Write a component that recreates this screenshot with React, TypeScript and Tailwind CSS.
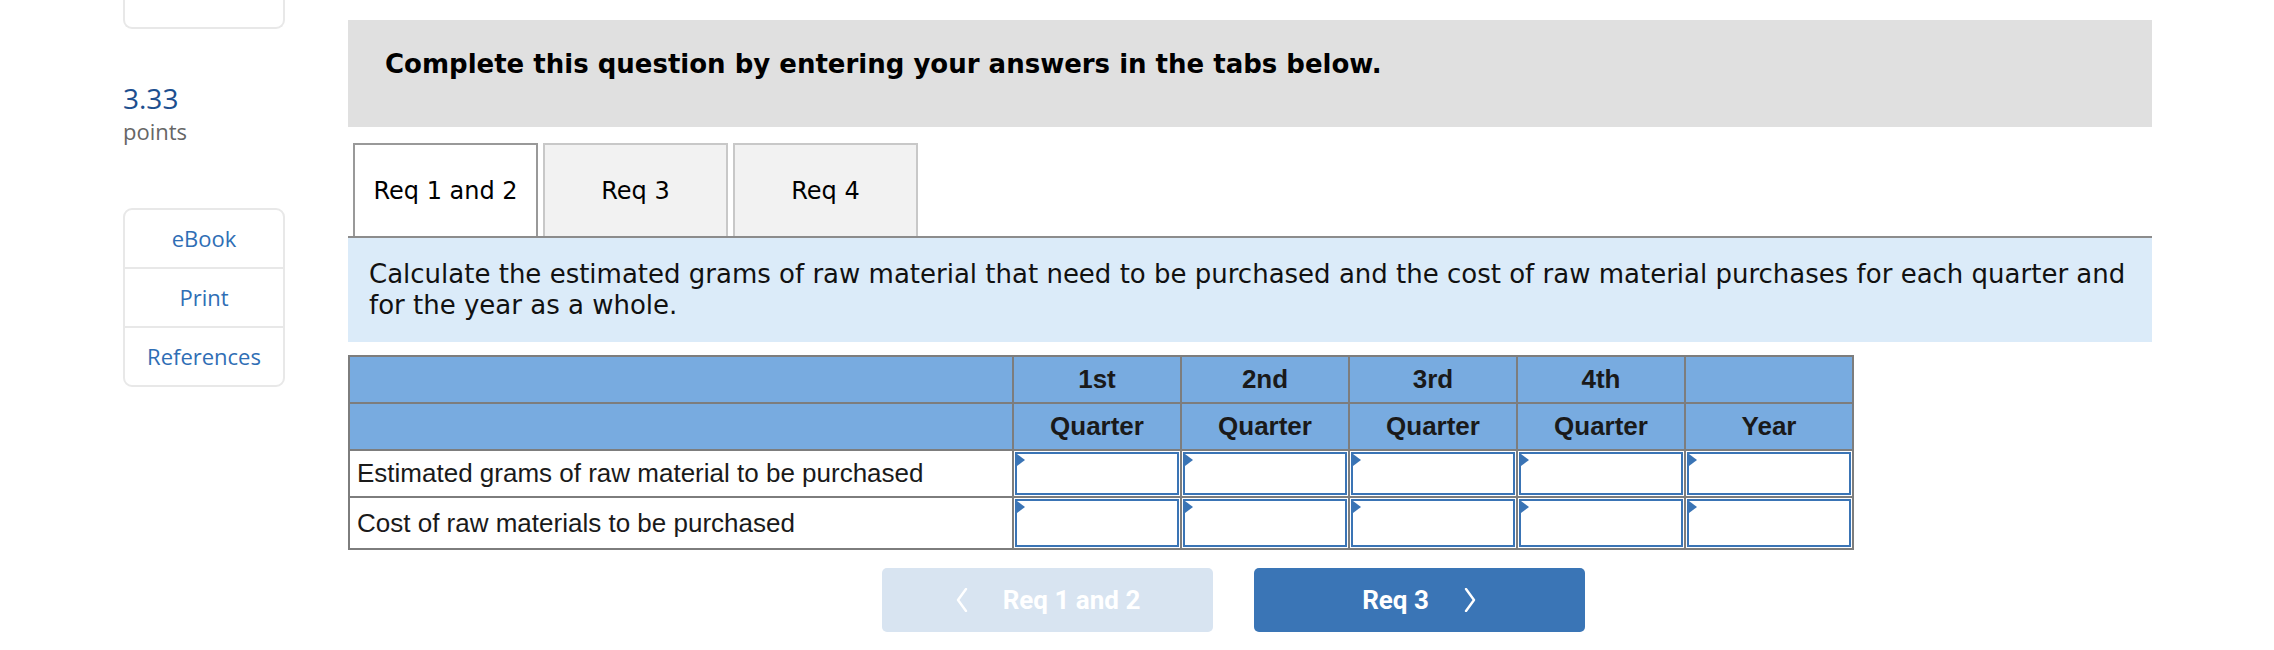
import { ReactNode } from 'react';

const COLUMNS = [
  ['1st', 'Quarter'],
  ['2nd', 'Quarter'],
  ['3rd', 'Quarter'],
  ['4th', 'Quarter'],
  ['', 'Year'],
];

const ROWS = [
  { label: 'Estimated grams of raw material to be purchased', h: 'h-[47px]', inner: 'h-[43px]' },
  { label: 'Cost of raw materials to be purchased', h: 'h-[52px]', inner: 'h-[48px]' },
];

const TABS = ['Req 1 and 2', 'Req 3', 'Req 4'];

function SideLink({ children, last }: { children: ReactNode; last?: boolean }) {
  return (
    <div
      className={`flex items-center justify-center text-[22px] text-[#2f6eb5] ${
        last ? 'h-[57px]' : 'h-[59px] border-b-2 border-[#e8e8e8]'
      }`}
    >
      {children}
    </div>
  );
}

function Chevron({ dir }: { dir: 'left' | 'right' }) {
  return (
    <svg width="14" height="24" viewBox="0 0 14 24" fill="none">
      <polyline
        points={dir === 'left' ? '11,1 3,12 11,23' : '3,1 11,12 3,23'}
        stroke="white"
        strokeWidth="2.4"
        strokeLinecap="round"
        strokeLinejoin="round"
      />
    </svg>
  );
}

export default function App() {
  return (
    <div className="flex w-[2274px] h-[650px] bg-white overflow-hidden">
      {/* Left column */}
      <div className="ml-[123px] w-[162px] shrink-0 font-['Open_Sans','Lato',sans-serif]">
        <div className="h-[29px] rounded-b-[9px] border-2 border-t-0 border-[#e8e8e8]" />
        <div className="mt-[51px] text-[28px] leading-[37px] text-[#1d4f8f]">3.33</div>
        <div className="mt-[0px] text-[22px] leading-[28px] text-[#666666]">points</div>
        <div className="mt-[63px] rounded-[9px] border-2 border-[#e8e8e8]">
          <SideLink>eBook</SideLink>
          <SideLink>Print</SideLink>
          <SideLink last>References</SideLink>
        </div>
      </div>

      {/* Main column */}
      <div className="ml-[63px] w-[1804px] shrink-0 font-['DejaVu_Sans','Verdana',sans-serif]">
        <div className="mt-[20px] h-[107px] bg-[#e0e0e0] pl-[37px] pt-[29px]">
          <p className="text-[26px] leading-[30px] font-bold text-black">
            Complete this question by entering your answers in the tabs below.
          </p>
        </div>

        {/* Tabs */}
        <div className="mt-[16px] flex items-end gap-[5px] pl-[5px] border-b-2 border-[#8c8c8c]">
          {TABS.map((tab, i) => (
            <div
              key={tab}
              className={`w-[185px] h-[93px] flex items-center justify-center text-[24px] text-black border-2 border-b-0 ${
                i === 0 ? 'bg-white border-[#999999]' : 'bg-[#f2f2f2] border-[#c8c8c8]'
              }`}
            >
              {tab}
            </div>
          ))}
        </div>

        <div className="bg-[#dbebf9] pl-[21px] pr-[20px] pt-[21px] h-[104px]">
          <p className="text-[26px] leading-[31px] text-[#111111]">
            Calculate the estimated grams of raw material that need to be purchased and the cost of raw
            material purchases for each quarter and for the year as a whole.
          </p>
        </div>

        {/* Table */}
        <table className="mt-[13px] w-[1504px] table-fixed border-collapse border-2 border-[#7d7d7d] font-['Liberation_Sans','Arial',sans-serif] text-[26px] text-[#1a1a1a]">
          <colgroup>
            <col className="w-[664px]" />
            {COLUMNS.map((_, i) => (
              <col key={i} className="w-[168px]" />
            ))}
          </colgroup>
          <thead>
            <tr className="h-[47px] bg-[#78abe0]">
              <th className="border-2 border-[#7d7d7d]" />
              {COLUMNS.map(([top], i) => (
                <th key={i} className="border-2 border-[#7d7d7d] font-bold">
                  {top}
                </th>
              ))}
            </tr>
            <tr className="h-[47px] bg-[#78abe0]">
              <th className="border-2 border-[#7d7d7d]" />
              {COLUMNS.map(([, bottom], i) => (
                <th key={i} className="border-2 border-[#7d7d7d] font-bold">
                  {bottom}
                </th>
              ))}
            </tr>
          </thead>
          <tbody>
            {ROWS.map(row => (
              <tr key={row.label} className={`${row.h} bg-white`}>
                <td className="border-2 border-[#7d7d7d] pl-[7px] text-left font-normal whitespace-nowrap">
                  {row.label}
                </td>
                {COLUMNS.map((_, i) => (
                  <td key={i} className="border-2 border-[#7d7d7d] p-[1px]">
                    <div className={`relative ${row.inner} border-2 border-[#3a74b5] bg-white`}>
                      <span className="absolute left-0 top-0 border-y-[6px] border-y-transparent border-l-[8px] border-l-[#3a74b5]" />
                    </div>
                  </td>
                ))}
              </tr>
            ))}
          </tbody>
        </table>

        {/* Prev / next */}
        <div className="mt-[18px] flex gap-[41px] pl-[534px] font-['Roboto',sans-serif] text-[26px] font-bold text-white">
          <button className="w-[331px] h-[64px] rounded-[5px] bg-[#d8e4f1] flex items-center justify-center gap-[34px]">
            <Chevron dir="left" />
            <span>Req 1 and 2</span>
          </button>
          <button className="w-[331px] h-[64px] rounded-[5px] bg-[#3a75b6] flex items-center justify-center gap-[34px]">
            <span>Req 3</span>
            <Chevron dir="right" />
          </button>
        </div>
      </div>
    </div>
  );
}
